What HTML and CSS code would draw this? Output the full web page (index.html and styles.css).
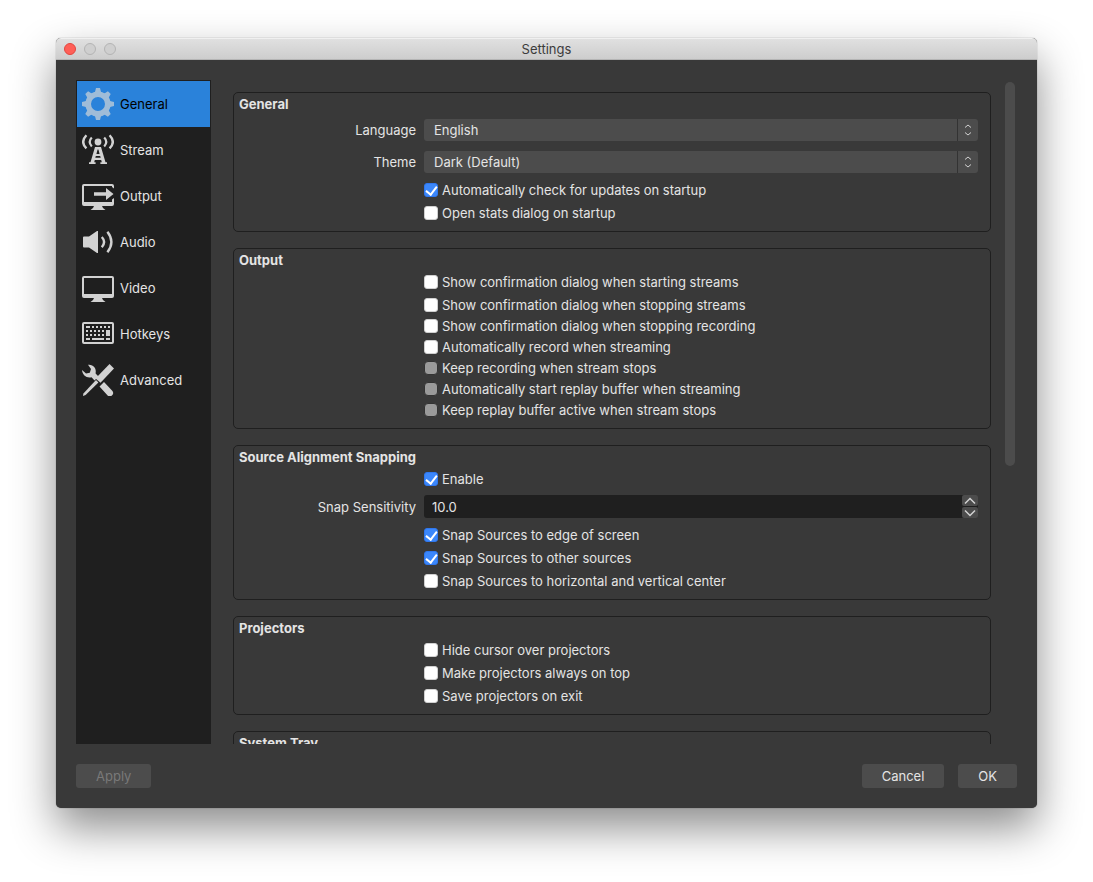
FILE: index.html
```html
<!DOCTYPE html>
<html lang="en">
<head>
    <meta charset="UTF-8">
    <meta name="viewport" content="width=device-width, initial-scale=1.0">
    <link rel="stylesheet" href="styles.css">
    <title>Settings</title>
</head>
<body>

    <div class="window">
        <header class="titlebar">
            <div class="lights">
                <span class="light close"></span>
                <span class="light"></span>
                <span class="light"></span>
            </div>
            <h1>Settings</h1>
        </header>

        <form class="content">
            <div class="main">
                <nav class="sidebar">
                    <button type="button" class="tab active">
                        <svg class="icon" viewBox="0 0 32 32">
                            <circle cx="16" cy="16" r="9.8" fill="none" stroke="currentColor" stroke-width="5.6"/>
                            <g id="teeth">
                                <path d="M10.500 5.500 13 4 14 0h4l1 4 2.500 1.500zM10.500 26.500 13 28l1 4h4l1-4 2.500-1.500z"/>
                                <path d="M5.500 10.500 4 13 0 14v4l4 1 1.500 2.500zM26.500 10.500 28 13l4 1v4l-4 1-1.500 2.500z"/>
                            </g>
                            <use href="#teeth" transform="rotate(45 16 16)"/>
                        </svg>
                        General
                    </button>
                    <button type="button" class="tab">
                        <svg class="icon" viewBox="0 0 32 32">
                            <circle cx="16" cy="8" r="3.4"/>
                            <path d="M9.800 3.600q-4.200 4.400 0 8.800M22.200 3.600q4.200 4.400 0 8.800" fill="none" stroke="currentColor" stroke-width="2.2"/>
                            <path d="M4.400 1.200Q-2 8 4.400 14.400M27.600 1.200Q34 8 27.600 14.400" fill="none" stroke="currentColor" stroke-width="2.4"/>
                            <path fill-rule="evenodd" d="M13 13h6l4.500 15.200H25V30h-6.600v-1.800h1.400L19.200 26h-6.400l-.6 2.200h1.400V30H7v-1.800h1.500zM15.600 15.500l-1.200 4.500h3.200l-1.200-4.500zM13.800 22l-.5 1.700h5.400L18.200 22z"/>
                        </svg>
                        Stream
                    </button>
                    <button type="button" class="tab">
                        <svg class="icon" viewBox="0 0 32 32">
                            <path d="M32 8.500V6a2 2 0 0 0-2-2H2a2 2 0 0 0-2 2v18a2 2 0 0 0 2 2h10l-1 2-2.500 2h15L21 28l-1-2h10a2 2 0 0 0 2-2v-6l-2 1.600V22H2V6h28v1z"/>
                            <path d="M12 12.300h12V8l7.500 6-7.500 6v-4.300H12z"/>
                        </svg>
                        Output
                    </button>
                    <button type="button" class="tab">
                        <svg class="icon" viewBox="0 0 32 32">
                            <path d="M2 10.500h5L15 5h1v22h-1l-8-5.500H2a1 1 0 0 1-1-1v-9a1 1 0 0 1 1-1z"/>
                            <path d="M19.800 11q4.600 5 0 10.200M25.400 5.800q8 10.200 0 20.500" fill="none" stroke="currentColor" stroke-width="2.400"/>
                        </svg>
                        Audio
                    </button>
                    <button type="button" class="tab">
                        <svg class="icon" viewBox="0 0 32 32">
                            <path fill-rule="evenodd" d="M2 4h28a2 2 0 0 1 2 2v18a2 2 0 0 1-2 2H20l1 2 2.500 2h-15l2.500-2 1-2H2a2 2 0 0 1-2-2V6a2 2 0 0 1 2-2zM2 6v16h28V6z"/>
                        </svg>
                        Video
                    </button>
                    <button type="button" class="tab">
                        <svg class="icon" viewBox="0 0 32 32">
                            <rect x="1" y="5" width="30" height="20" rx="1" fill="none" stroke="currentColor" stroke-width="2"/>
                            <path d="M4 9h4M10 9h2M14 9h2M18 9h2M22 9h2M26 9h2" fill="none" stroke="currentColor" stroke-width="2"/>
                            <path d="M4 13h19M4 17h19" fill="none" stroke="currentColor" stroke-width="2" stroke-dasharray="2 2"/>
                            <path d="M24 12h4v6h-4zM4 20h4v2H4zM10 20h12v2H10zM24 20h4v2h-4z"/>
                        </svg>
                        Hotkeys
                    </button>
                    <button type="button" class="tab">
                        <svg class="icon" viewBox="0 0 32 32">
                            <path d="M27.500 0 32 4.500 18.500 18.800 13.500 14.500z"/>
                            <path d="M14 16 16.400 18.400 3.600 31 1 32l.4-2.400z"/>
                            <path d="M17.500 22.500 22 18l8 8.500a3.200 3.200 0 0 1-4.600 4.800z"/>
                            <path d="M6 .8C11 .2 14.800 4 13.600 9.400L16.500 12.500 12.500 16.400 9.500 13.200C4.800 14.400.4 11.200 0 6l4 3.600 3.800-.8L9 5z"/>
                        </svg>
                        Advanced
                    </button>
                </nav>

                <div class="pages">
                    <fieldset class="group">
                        <h2>General</h2>
                        <div class="row">
                            <label for="language">Language</label>
                            <div class="combo">
                                <select id="language">
                                    <option>English</option>
                                </select>
                                <span class="combo-arrows">
                                    <svg viewBox="0 0 8 12"><path d="M1 3.500 4 1l3 2.500M1 8.500 4 11l3-2.500"/></svg>
                                </span>
                            </div>
                        </div>
                        <div class="row">
                            <label for="theme">Theme</label>
                            <div class="combo">
                                <select id="theme">
                                    <option>Dark (Default)</option>
                                </select>
                                <span class="combo-arrows">
                                    <svg viewBox="0 0 8 12"><path d="M1 3.500 4 1l3 2.500M1 8.500 4 11l3-2.500"/></svg>
                                </span>
                            </div>
                        </div>
                        <label class="check"><input type="checkbox" checked>Automatically check for updates on startup</label>
                        <label class="check"><input type="checkbox">Open stats dialog on startup</label>
                    </fieldset>

                    <fieldset class="group">
                        <h2>Output</h2>
                        <label class="check"><input type="checkbox">Show confirmation dialog when starting streams</label>
                        <label class="check tight"><input type="checkbox">Show confirmation dialog when stopping streams</label>
                        <label class="check tight"><input type="checkbox">Show confirmation dialog when stopping recording</label>
                        <label class="check tight"><input type="checkbox">Automatically record when streaming</label>
                        <label class="check tight"><input type="checkbox" disabled>Keep recording when stream stops</label>
                        <label class="check tight"><input type="checkbox" disabled>Automatically start replay buffer when streaming</label>
                        <label class="check"><input type="checkbox" disabled>Keep replay buffer active when stream stops</label>
                    </fieldset>

                    <fieldset class="group">
                        <h2>Source Alignment Snapping</h2>
                        <label class="check"><input type="checkbox" checked>Enable</label>
                        <div class="row">
                            <label for="sensitivity">Snap Sensitivity</label>
                            <div class="spin">
                                <input type="number" id="sensitivity" value="10.0" step="0.5">
                                <div class="spin-buttons">
                                    <button type="button" aria-label="Increase"><svg viewBox="0 0 12 8"><path d="M1 6.500 6 1.500l5 5"/></svg></button>
                                    <button type="button" aria-label="Decrease"><svg viewBox="0 0 12 8"><path d="M1 1.500l5 5 5-5"/></svg></button>
                                </div>
                            </div>
                        </div>
                        <label class="check"><input type="checkbox" checked>Snap Sources to edge of screen</label>
                        <label class="check"><input type="checkbox" checked>Snap Sources to other sources</label>
                        <label class="check"><input type="checkbox">Snap Sources to horizontal and vertical center</label>
                    </fieldset>

                    <fieldset class="group">
                        <h2>Projectors</h2>
                        <label class="check"><input type="checkbox">Hide cursor over projectors</label>
                        <label class="check"><input type="checkbox">Make projectors always on top</label>
                        <label class="check"><input type="checkbox">Save projectors on exit</label>
                    </fieldset>

                    <fieldset class="group">
                        <h2>System Tray</h2>
                    </fieldset>
                </div>

                <div class="scrollbar"><div class="thumb"></div></div>
            </div>

            <footer class="buttons">
                <button type="button" class="btn" disabled>Apply</button>
                <button type="button" class="btn cancel">Cancel</button>
                <button type="submit" class="btn">OK</button>
            </footer>
        </form>
    </div>

</body>
</html>
```
FILE: styles.css
```css
* {
    box-sizing: border-box;
}

body {
    margin: 0;
    height: 100vh;
    padding: 38px 56px 74px;
    display: flex;
    background: #fff;
    color: #e4e4e4;
    font-family: Inter, "Liberation Sans", sans-serif;
    font-size: 13px;
    font-weight: 400;
}

button, input, select {
    font: inherit;
    color: inherit;
    border: none;
    margin: 0;
}

.window {
    flex: 1;
    min-width: 0;
    display: flex;
    flex-direction: column;
    background: #393939;
    border-radius: 5px;
    box-shadow: 0 0 1px rgba(0, 0, 0, 0.6), 0 20px 44px rgba(0, 0, 0, 0.45);
}

/* title bar */
.titlebar {
    display: grid;
    grid-template-columns: 1fr auto 1fr;
    align-items: center;
    height: 22px;
    padding: 0 8px;
    border-radius: 5px 5px 0 0;
    border-top: 1px solid #f0f0f0;
    border-bottom: 1px solid #b4b4b4;
    background: linear-gradient(#e0e0e0, #cdcdcd);
}

.titlebar h1 {
    margin: 0;
    font-size: 13px;
    font-weight: 400;
    color: #3c3c3c;
}

.lights {
    display: flex;
    gap: 8px;
}

.light {
    width: 12px;
    height: 12px;
    border-radius: 50%;
    border: 1px solid #b4b4b4;
    background: #cfcfcf;
}

.light.close {
    background: #ff5f57;
    border-color: #e2463f;
}

.content {
    flex: 1;
    min-height: 0;
    display: flex;
    flex-direction: column;
    gap: 20px;
    padding: 20px;
}

.main {
    flex: 1;
    min-height: 0;
    display: flex;
}

/* section list */
.sidebar {
    width: 135px;
    padding: 1px;
    background: #1f1f1f;
}

.tab {
    display: flex;
    align-items: center;
    gap: 6px;
    width: 100%;
    height: 46px;
    padding: 0 5px;
    background: none;
    text-align: left;
}

.tab.active {
    background: #2a82da;
    color: #000;
}

.icon {
    width: 32px;
    height: 32px;
    color: #d2d2d2;
    fill: currentColor;
}

.tab.active .icon {
    color: #9fbcd8;
}

/* pages */
.pages {
    flex: 1;
    min-width: 0;
    margin: 0 14px 0 22px;
    padding-top: 12px;
    overflow-y: auto;
    scrollbar-width: none;
}

.group {
    min-width: 0;
    margin: 0 0 16px;
    padding: 0 12px 5px 0;
    border: 1px solid #1f1f1f;
    border-radius: 5px;
}

.group h2 {
    margin: 0 0 1px 5px;
    font-size: 13px;
    line-height: 22px;
    font-weight: 700;
}

.row {
    display: grid;
    grid-template-columns: 182px 1fr;
    column-gap: 8px;
    align-items: center;
    padding: 3px 0 7px;
}

.row label {
    text-align: right;
}

.combo {
    position: relative;
    height: 22px;
}

.combo select {
    appearance: none;
    width: 100%;
    height: 22px;
    padding: 0 30px 0 10px;
    border-radius: 3px;
    background: #4c4c4c;
}

.combo-arrows {
    position: absolute;
    top: 0;
    right: 0;
    width: 21px;
    height: 22px;
    display: flex;
    align-items: center;
    justify-content: center;
    border-left: 1px solid #333;
    pointer-events: none;
}

.combo-arrows svg {
    width: 8px;
    height: 12px;
}

.combo-arrows path,
.spin-buttons path {
    fill: none;
    stroke: #d2d2d2;
}

.spin {
    display: flex;
    height: 23px;
    border-radius: 3px;
    background: #1f1f1f;
}

.spin input {
    flex: 1;
    min-width: 0;
    padding: 0 8px;
    background: none;
    appearance: textfield;
}

.spin input::-webkit-inner-spin-button {
    appearance: none;
}

.spin-buttons {
    width: 16px;
    display: grid;
    grid-template-rows: 1fr 1fr;
    gap: 1px;
}

.spin-buttons button {
    display: flex;
    align-items: center;
    justify-content: center;
    padding: 0;
    border-radius: 2px;
    background: #4c4c4c;
}

.spin-buttons svg {
    width: 12px;
    height: 8px;
}

.spin-buttons path {
    stroke-width: 1.5;
}

.check {
    display: flex;
    align-items: center;
    gap: 4px;
    width: fit-content;
    height: 20px;
    margin: 0 0 3px 190px;
}

.check.tight {
    margin-bottom: 1px;
}

.check input {
    appearance: none;
    width: 14px;
    height: 14px;
    border: 1px solid #d0d0d0;
    border-radius: 3px;
    background: #fff;
}

.check input:checked {
    border-color: #2f77ee;
    background: #3b87fb;
}

.check input:checked::before {
    content: "";
    display: block;
    width: 5px;
    height: 9px;
    margin: 0 3px;
    border: solid #fff;
    border-width: 0 2px 2px 0;
    transform: rotate(38deg);
}

.check input:disabled {
    border-color: #333;
    border-radius: 4px;
    background: #9a9a9a;
}

/* scrollbar */
.scrollbar {
    width: 10px;
    margin: 2px 2px 0 0;
}

.thumb {
    height: 58%;
    border-radius: 5px;
    background: #4c4c4c;
}

/* bottom buttons */
.buttons {
    display: flex;
    gap: 14px;
}

.btn {
    height: 24px;
    padding: 0 20px;
    border-radius: 3px;
    background: #4c4c4c;
}

.btn:disabled {
    color: #797979;
}

.cancel {
    margin-left: auto;
}
```
